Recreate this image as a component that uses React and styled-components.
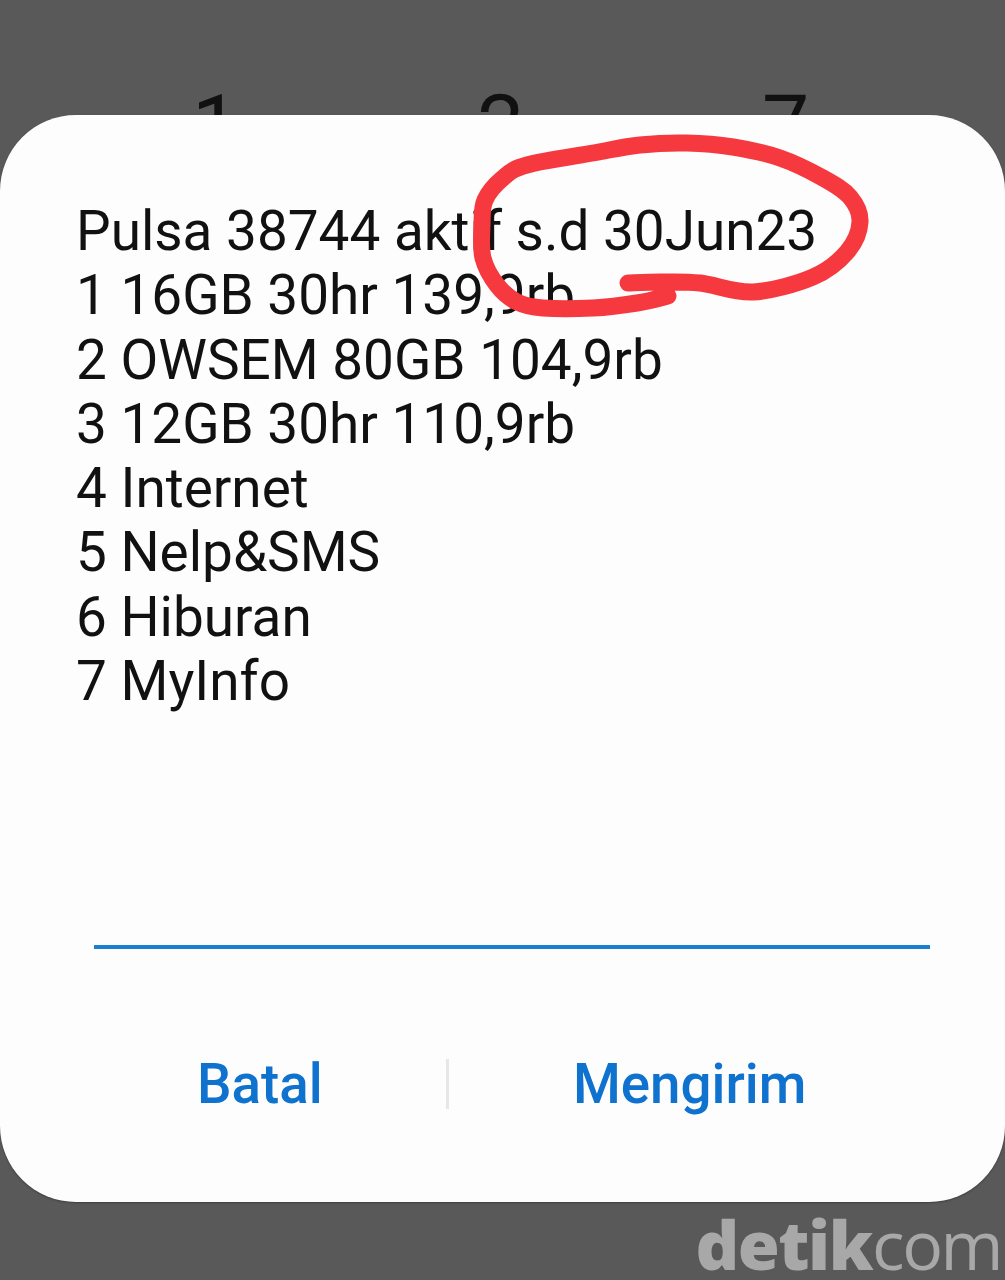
import React from "react"
import styled, { createGlobalStyle } from "styled-components"

const GlobalStyle = createGlobalStyle`
  html, body {
    margin: 0;
    padding: 0;
    background: #595959;
  }
`

const Screen = styled.div`
  position: relative;
  width: 1005px;
  height: 1280px;
  overflow: hidden;
  display: flex;
  flex-direction: column;
  background: #595959;
  font-family: Roboto, "Liberation Sans", sans-serif;
`

const Keypad = styled.div`
  height: 115px;
  flex: none;
  overflow: hidden;
  display: grid;
  grid-template-columns: repeat(3, 285px);
  padding: 84px 0 0 73px;
  box-sizing: border-box;
`

const Key = styled.span`
  text-align: center;
  font-size: 84px;
  line-height: 84px;
  color: #111;
`

const Dialog = styled.div`
  flex: none;
  height: 1087px;
  box-sizing: border-box;
  display: flex;
  flex-direction: column;
  padding: 84px 0 0;
  background: #fdfdfd;
  border-radius: 76px;
  box-shadow: 0 1px 2px rgba(0, 0, 0, 0.3);
`

const Message = styled.div`
  padding-left: 76px;
  height: 720px;
  flex: none;
  font-size: 54.9px;
  line-height: 64.3px;
  color: #111;
`

const Line = styled.div`
  white-space: nowrap;
`

const InputLine = styled.div`
  height: 4px;
  margin: 26px 75px 0 94px;
  background: #1a7fd0;
`

const Actions = styled.div`
  display: flex;
  align-items: center;
  margin-top: 109px;
  height: 52px;
`

const ActionButton = styled.button`
  width: ${props => props.$width}px;
  flex: none;
  border: 0;
  padding: 0 0 0 ${props => props.$inset}px;
  box-sizing: border-box;
  background: none;
  font-family: inherit;
  font-size: 54.7px;
  font-weight: 500;
  line-height: 52px;
  text-align: left;
  color: #0e72ce;
`

const Divider = styled.div`
  width: 3px;
  height: 50px;
  flex: none;
  background: #e7e7e7;
`

const Footer = styled.div`
  flex: 1;
  display: flex;
  justify-content: flex-end;
  align-items: flex-end;
  padding-right: 4px;
  font-family: "Open Sans", sans-serif;
  font-size: 68px;
  line-height: 72px;
  color: #a8a8a8;
`

const LogoBold = styled.span`
  font-weight: 800;
  letter-spacing: -1.5px;
`

const LogoLight = styled.span`
  font-weight: 400;
  letter-spacing: -2.5px;
`

const Scribble = styled.svg`
  position: absolute;
  left: 0;
  top: 0;
  pointer-events: none;
`

const LINES = [
  "Pulsa 38744 aktif s.d 30Jun23",
  "1 16GB 30hr 139,9rb",
  "2 OWSEM 80GB 104,9rb",
  "3 12GB 30hr 110,9rb",
  "4 Internet",
  "5 Nelp&SMS",
  "6 Hiburan",
  "7 MyInfo",
]

const SCRIBBLE_POINTS = [
  [628, 283], [660, 282], [700, 283], [753, 292], [813, 277], [847, 252],
  [860, 222], [850, 197], [823, 178], [780, 158], [733, 147], [687, 143],
  [640, 145], [593, 153], [527, 165], [503, 178], [485, 200], [482, 225],
  [483, 258], [497, 285], [517, 302], [543, 308], [593, 308], [637, 303],
  [668, 296],
]

// Smooth line through the hand-drawn points (Catmull-Rom to cubic)
const toPath = points =>
  points.reduce((d, [x, y], i) => {
    if (i === 0) return `M${x} ${y}`
    const p0 = points[Math.max(i - 2, 0)]
    const p1 = points[i - 1]
    const p3 = points[Math.min(i + 1, points.length - 1)]
    const c1x = p1[0] + (x - p0[0]) / 6
    const c1y = p1[1] + (y - p0[1]) / 6
    const c2x = x - (p3[0] - p1[0]) / 6
    const c2y = y - (p3[1] - p1[1]) / 6
    return `${d} C${c1x} ${c1y} ${c2x} ${c2y} ${x} ${y}`
  }, "")

const App = () => (
  <Screen>
    <GlobalStyle />
    <Keypad>
      <Key>1</Key>
      <Key>2</Key>
      <Key>7</Key>
    </Keypad>
    <Dialog>
      <Message>
        {LINES.map(line => (
          <Line key={line}>{line}</Line>
        ))}
      </Message>
      <InputLine />
      <Actions>
        <ActionButton $width={446} $inset={197}>
          Batal
        </ActionButton>
        <Divider />
        <ActionButton $width={556} $inset={124}>
          Mengirim
        </ActionButton>
      </Actions>
    </Dialog>
    <Footer>
      <span>
        <LogoBold>detik</LogoBold>
        <LogoLight>com</LogoLight>
      </span>
    </Footer>
    <Scribble width="1005" height="1280" viewBox="0 0 1005 1280">
      <path
        d={toPath(SCRIBBLE_POINTS)}
        fill="none"
        stroke="#f5393f"
        strokeWidth="17"
        strokeLinecap="round"
        strokeLinejoin="round"
      />
    </Scribble>
  </Screen>
)

export default App
